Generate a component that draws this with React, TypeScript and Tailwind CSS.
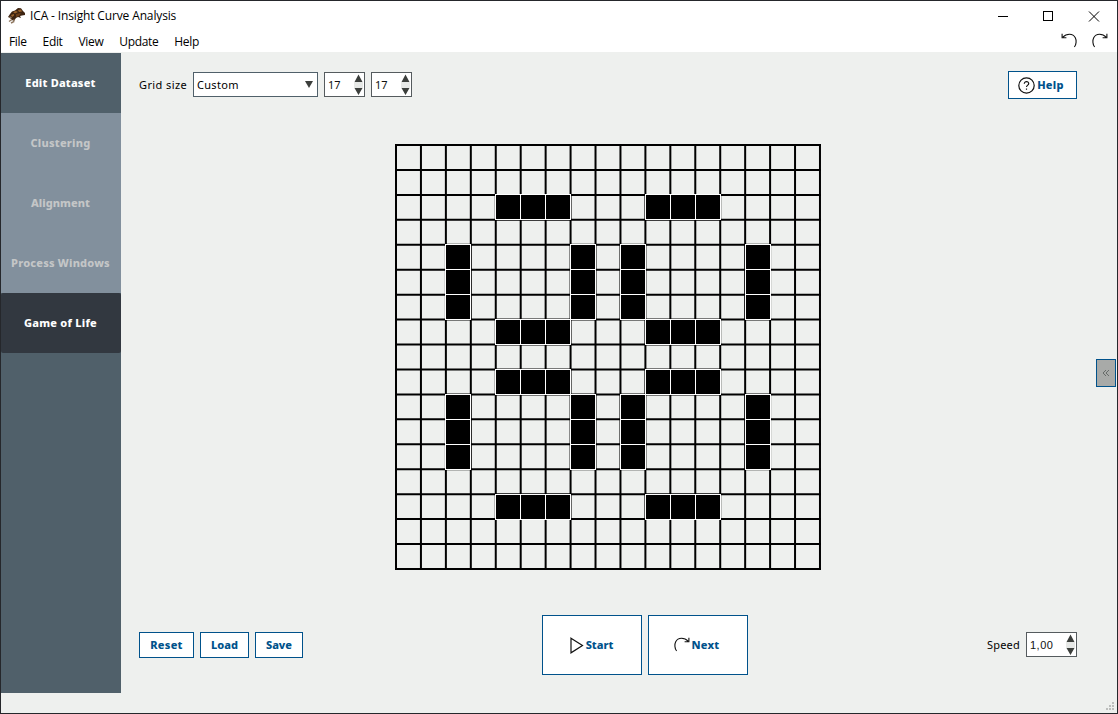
import type { ReactNode } from "react";

const N = 17;
const PITCH = 24.94;
const H = [[4, 2], [10, 2], [4, 7], [10, 7], [4, 9], [10, 9], [4, 14], [10, 14]];
const V = [[2, 4], [7, 4], [9, 4], [14, 4], [2, 10], [7, 10], [9, 10], [14, 10]];
const alive = [
  ...H.flatMap(([x, y]) => [0, 1, 2].map((i) => [x + i, y])),
  ...V.flatMap(([x, y]) => [0, 1, 2].map((i) => [x, y + i])),
];

function Board() {
  const lines = Array.from({ length: N + 1 }, (_, i) => 1 + i * PITCH);
  return (
    <svg width="426" height="426" viewBox="0 0 426 426" className="shrink-0">
      <g stroke="#000" strokeWidth="2">
        {lines.map((p) => (
          <g key={p}>
            <path d={`M${p} 0V426`} />
            <path d={`M0 ${p}H426`} />
          </g>
        ))}
      </g>
      <g fill="#000" stroke="#fff" strokeWidth="1" shapeRendering="crispEdges">
        {alive.map(([x, y]) => (
          <rect key={`${x}-${y}`} x={x * 25 + 0.5} y={y * 25 + 0.5} width="25" height="25" />
        ))}
      </g>
    </svg>
  );
}

function Turn({ flip = false }: { flip?: boolean }) {
  return (
    <svg width="16" height="16" viewBox="0 0 16 16" fill="none" stroke="#111" strokeWidth="1.1" className={flip ? "-scale-x-100" : ""}>
      <path d="M2.6 14C.6 11.500.4 7.300 1.700 4.800 3 2.200 5.200 1.300 7.500 1.300c2.700 0 4.700.8 6.600 2.900M14.900.8v4h-4.300" />
    </svg>
  );
}

function Btn({ children, className }: { children: ReactNode; className: string }) {
  return (
    <button className={`flex items-center justify-center border border-[#00528b] bg-white text-[11px] font-extrabold text-[#00528b] ${className}`}>
      {children}
    </button>
  );
}

function Spin({ value, className }: { value: string; className: string }) {
  return (
    <div className={`mb-px flex h-[25px] items-center justify-between border border-[#555b5e] bg-white pl-[3px] pr-px text-[11px] text-[#111] ${className}`}>
      <span className="pt-px">{value}</span>
      <svg width="9" height="23" viewBox="0 0 9 23" fill="#3c3f3c">
        <path d="M0 9h9v6H0z" fill="#e6e8e6" />
        <path d="M4.500 1.500L8.500 9h-8zM4.500 22L8.500 15h-8z" />
      </svg>
    </div>
  );
}

function AppIcon() {
  return (
    <svg width="18" height="18" viewBox="0 0 18 18">
      <path d="M2 7L4 4.500l3-1L10 1l3 .2L15 4l2 2v2l-3 .5-2 .5 1 2-3-1-2 1-2 3-2-1-2-2-2-1z" fill="#3d2412" />
      <path d="M5 5l3-1 2 1-3 1.500zM10 3l3-.5 1 2-3 .5zM3 8l3-1v1.500L4 10z" fill="#9a632c" />
      <path d="M8 7l5-1-2 3-3 1z" fill="#6c3f1a" />
      <path d="M1.500 10l2 1M1 14.500l3-2M6 12.500l-.5 3M3 16l2-1" stroke="#8f7861" strokeWidth="1.500" fill="none" />
    </svg>
  );
}

const nav = [
  { label: "Edit Dataset", style: "bg-[#50606a] text-white tracking-[0.2px]" },
  { label: "Clustering", style: "bg-[#82909d] text-[#c4c6c7] tracking-[0.25px]" },
  { label: "Alignment", style: "bg-[#82909d] text-[#c4c6c7] tracking-[0.05px]" },
  { label: "Process Windows", style: "bg-[#82909d] text-[#c4c6c7] tracking-[0.2px]" },
  { label: "Game of Life", style: "bg-[#323840] text-white tracking-[0.25px] rounded-[2px]" },
];

export default function App() {
  return (
    <div className="flex h-[714px] w-[1118px] flex-col overflow-hidden border border-[#25272b] bg-white font-['Noto_Sans',sans-serif] text-[11px] leading-4 text-black">
      <header className="flex h-[30px] shrink-0 items-center pl-[7px]">
        <AppIcon />
        <span className="ml-1 font-['Open_Sans',sans-serif] text-[12px] tracking-[-0.14px]">ICA - Insight Curve Analysis</span>
        <svg className="ml-auto" width="120" height="28" viewBox="0 0 120 28" fill="none" stroke="#000" shapeRendering="crispEdges">
          <path d="M1 14.500h10M46.500 9.500h9v9h-9z" />
          <path d="M92 9.500l10 10M102 9.500l-10 10" shapeRendering="auto" />
        </svg>
      </header>
      <nav className="flex h-[21px] shrink-0 items-center gap-[16px] pl-2 pr-[9px] pt-px font-['Open_Sans',sans-serif] text-[12px] tracking-[-0.35px]">
        <span>File</span><span>Edit</span><span>View</span><span>Update</span><span>Help</span>
        <div className="ml-auto flex gap-[15px] pb-0.5"><Turn flip /><Turn /></div>
      </nav>
      <div className="flex min-h-0 flex-1 bg-[#eef0ee]">
        <aside className="mt-px h-[640px] w-[120px] shrink-0 bg-[#50606a]">
          {nav.map((n) => (
            <div key={n.label} className={`flex h-[60px] items-center justify-center whitespace-nowrap pr-px font-extrabold ${n.style}`}>{n.label}</div>
          ))}
        </aside>
        <main className="flex flex-1 flex-col pl-[18px] pr-10 pt-[19px]">
          <div className="flex h-7 items-center">
            <span className="w-[54px] tracking-[0.4px]">Grid size</span>
            <div className="mb-px flex h-[25px] w-[125px] items-center justify-between border border-[#50606a] bg-white pl-[3px] pr-1 tracking-[0.3px]">
              <span className="pt-px">Custom</span>
              <svg width="8" height="8" viewBox="0 0 8 8" fill="#3c3f3c"><path d="M0 0h8L4 7z" /></svg>
            </div>
            <Spin value="17" className="ml-1.5 w-[41px]" />
            <Spin value="17" className="ml-1.5 w-[41px]" />
            <Btn className="ml-auto h-7 w-[69px] gap-0.5 pr-[3px] tracking-[0.3px]">
              <svg width="17" height="17" viewBox="0 0 17 17" fill="none" stroke="#111" strokeWidth="1.2">
                <circle cx="8.5" cy="8.500" r="7.700" /><path d="M6.300 6.800c0-3 4.600-2.800 4.400-.1-.1 1.400-2.200 1.500-2.200 3.400M8.500 11.500v1.300" />
              </svg>
              Help
            </Btn>
          </div>
          <div className="mt-[45px] flex pl-[256px]"><Board /></div>
          <div className="mt-[45px] flex h-[60px] items-center">
            <Btn className="h-[26px] w-[55px] tracking-[0.3px]">Reset</Btn>
            <Btn className="ml-1.5 h-[26px] w-[49px]">Load</Btn>
            <Btn className="ml-1.5 h-[26px] w-[48px]">Save</Btn>
            <Btn className="ml-[239px] h-[60px] w-[100px] gap-0.5 pr-px">
              <svg width="14" height="17" viewBox="0 0 14 17" fill="none" stroke="#111" strokeWidth="1.2"><path d="M1 1.200l11.500 7.300L1 15.800z" /></svg>
              Start
            </Btn>
            <Btn className="ml-1.5 h-[60px] w-[100px] gap-0.5 pr-[3px] tracking-[0.2px]"><Turn />Next</Btn>
            <span className="ml-auto mr-1.5 tracking-[0.2px]">Speed</span>
            <Spin value="1,00" className="w-[51px] font-['Liberation_Sans',sans-serif] tracking-[0.5px]" />
          </div>
          <svg width="9" height="9" viewBox="0 0 9 9" fill="#bcbebc" className="-mr-[38px] mb-[2px] ml-auto mt-auto shrink-0">
            <path d="M6 0h2v2H6zM3 3h2v2H3zM6 3h2v2H6zM0 6h2v2H0zM3 6h2v2H3zM6 6h2v2H6z" />
          </svg>
        </main>
      </div>
      <button className="absolute left-[1096px] top-[359px] flex h-7 w-5 items-center justify-center border border-[#00528b] bg-[#a8aaa8] text-[#666]">
        <svg width="8" height="8" viewBox="0 0 8 8" fill="none" stroke="#666b69"><path d="M4 1L1 4l3 3M7 1L4 4l3 3" /></svg>
      </button>
    </div>
  );
}
